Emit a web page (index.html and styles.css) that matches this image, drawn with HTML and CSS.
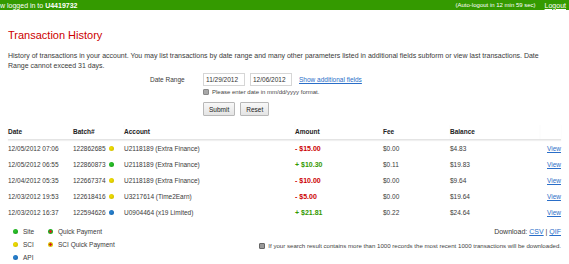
FILE: index.html
```html
<!DOCTYPE html>
<html>
<head>
<meta charset="utf-8">
<link rel="stylesheet" href="styles.css">
</head>
<body>
<div class="topbar">
  <div class="who">w logged in to <b>U4419732</b></div>
  <div class="session"><span class="auto">(Auto-logout in 12 min 59 sec)</span><a class="logout" href="#">Logout</a></div>
</div>
<div class="content">
  <h1 class="title">Transaction History</h1>
  <p class="intro">History of transactions in your account. You may list transactions by date range and many other parameters listed in additional fields subform or view last transactions. Date Range cannot exceed 31 days.</p>
  <div class="form">
    <div class="form-row">
      <label class="form-label">Date Range</label>
      <div class="form-fields">
        <div class="inputs">
          <input class="date" type="text" value="11/29/2012">
          <input class="date" type="text" value="12/06/2012">
          <a href="#" class="link">Show additional fields</a>
        </div>
        <div class="hint"><span class="info-icon"></span>Please enter date in mm/dd/yyyy format.</div>
        <div class="buttons">
          <button class="btn">Submit</button>
          <button class="btn">Reset</button>
        </div>
      </div>
    </div>
  </div>
  <table class="tx">
    <colgroup>
      <col class="c-date"><col class="c-batch"><col class="c-acc"><col class="c-amt"><col class="c-fee"><col class="c-bal"><col class="c-view">
    </colgroup>
    <thead>
      <tr><th>Date</th><th>Batch#</th><th>Account</th><th>Amount</th><th>Fee</th><th>Balance</th><th></th></tr>
    </thead>
    <tbody>
      <tr><td>12/05/2012 07:06</td><td>122862685 <span class="dot sci"></span></td><td>U2118189 (Extra Finance)</td><td class="neg">- $15.00</td><td>$0.00</td><td>$4.83</td><td><a href="#" class="link">View</a></td></tr>
      <tr><td>12/05/2012 06:55</td><td>122860873 <span class="dot site"></span></td><td>U2118189 (Extra Finance)</td><td class="pos">+ $10.30</td><td>$0.11</td><td>$19.83</td><td><a href="#" class="link">View</a></td></tr>
      <tr><td>12/04/2012 05:35</td><td>122667374 <span class="dot sci"></span></td><td>U2118189 (Extra Finance)</td><td class="neg">- $10.00</td><td>$0.00</td><td>$9.64</td><td><a href="#" class="link">View</a></td></tr>
      <tr><td>12/03/2012 19:53</td><td>122618416 <span class="dot sci"></span></td><td>U3217614 (Time2Earn)</td><td class="neg">- $5.00</td><td>$0.00</td><td>$19.64</td><td><a href="#" class="link">View</a></td></tr>
      <tr><td>12/03/2012 16:37</td><td>122594626 <span class="dot api"></span></td><td>U0904464 (x19 Limited)</td><td class="pos">+ $21.81</td><td>$0.22</td><td>$24.64</td><td><a href="#" class="link">View</a></td></tr>
    </tbody>
  </table>
  <div class="footer">
    <div class="legend">
      <div class="leg-item"><span class="dot site"></span>Site</div>
      <div class="leg-item"><span class="dot qp"></span>Quick Payment</div>
      <div class="leg-item"><span class="dot sci"></span>SCI</div>
      <div class="leg-item"><span class="dot sciqp"></span>SCI Quick Payment</div>
      <div class="leg-item"><span class="dot api"></span>API</div>
    </div>
    <div class="download-box">
      <div class="download">Download: <a href="#" class="link">CSV</a> | <a href="#" class="link">QIF</a></div>
      <div class="note"><span class="info-icon dark"></span>If your search result contains more than 1000 records the most recent 1000 transactions will be downloaded.</div>
    </div>
  </div>
</div>
</body>
</html>
```
FILE: styles.css
```css
html, body {
  margin: 0;
  padding: 0;
  background: #fff;
}
body {
  font-family: "Liberation Sans", Arial, sans-serif;
  color: #3a3a3a;
  font-size: 6.5px;
}
.topbar {
  height: 10px;
  background: #349a00;
  color: #fff;
  display: flex;
  justify-content: space-between;
  align-items: center;
  font-size: 7px;
  padding: 0 3px 0 0;
  white-space: nowrap;
}
.who b { font-weight: bold; }
.session { display: flex; align-items: center; }
.auto { font-size: 6px; margin-right: 9px; }
.logout { color: #fff; text-decoration: underline; font-size: 7px; }
.content { padding: 0 8px; }
.title {
  margin: 0;
  padding-top: 18px;
  color: #cc0000;
  font-size: 11px;
  font-weight: normal;
  line-height: 14px;
}
.intro {
  margin: 9px 0 0 0;
  line-height: 10px;
  font-size: 7px;
}
.form { margin-top: 2px; }
.form-row { display: flex; }
.form-label {
  padding-left: 142px;
  line-height: 13px;
  box-sizing: border-box;
  width: 195px;
}
.inputs { display: flex; align-items: center; gap: 5px; }
.date {
  width: 42px;
  height: 13px;
  box-sizing: border-box;
  border: 1px solid #d6d6d6;
  font-family: "Liberation Sans", Arial, sans-serif;
  font-size: 6.5px;
  padding: 0 2px;
  color: #333;
  margin: 0;
}
.link { color: #2a6ec8; text-decoration: underline; }
.inputs .link { margin-left: 2px; }
.hint {
  font-size: 6px;
  margin-top: 3px;
  display: flex;
  align-items: center;
  color: #444;
}
.info-icon {
  display: inline-block;
  width: 4px;
  height: 4px;
  background: #a8a8a8;
  border: 1px solid #888;
  border-radius: 1px;
  margin-right: 3px;
}
.info-icon.dark { background: #999; border-color: #666; }
.buttons { display: flex; gap: 5px; margin-top: 7px; }
.btn {
  height: 14px;
  padding: 0 5px;
  font-family: "Liberation Sans", Arial, sans-serif;
  font-size: 6.5px;
  color: #222;
  background: linear-gradient(#f8f8f8, #e4e4e4);
  border: 1px solid #b8b8b8;
  border-radius: 1px;
  margin: 0;
}
.tx {
  margin-top: 8px;
  width: 553px;
  border-collapse: collapse;
  table-layout: fixed;
}
.c-date { width: 65px; }
.c-batch { width: 51px; }
.c-acc { width: 171px; }
.c-amt { width: 88px; }
.c-fee { width: 67px; }
.c-bal { width: 90px; }
.c-view { width: 21px; }
.tx th {
  text-align: left;
  font-weight: bold;
  color: #222;
  padding: 0;
  height: 15px;
  border-bottom: 1px solid #e4e4e4;
  box-shadow: 0 1px 1px #f0f0f0;
}
.tx td {
  padding: 0;
  height: 16px;
  white-space: nowrap;
}
.tx td:last-child { text-align: right; }
.neg { color: #cc0000; font-weight: bold; font-size: 7px; }
.pos { color: #339900; font-weight: bold; font-size: 7px; }
.dot {
  display: inline-block;
  width: 5px;
  height: 5px;
  border-radius: 50%;
  vertical-align: middle;
  margin-left: 2px;
  box-sizing: border-box;
}
.dot.sci { background: radial-gradient(circle at 40% 40%, #f2e200, #c9b400); }
.dot.site { background: radial-gradient(circle at 40% 40%, #2ec82e, #139313); }
.dot.api { background: radial-gradient(circle at 40% 40%, #2a86d4, #145fa6); }
.dot.qp { background: radial-gradient(circle, #d42020 0 1px, #1fae1f 1.5px); }
.dot.sciqp { background: radial-gradient(circle, #d42020 0 1px, #d6c200 1.5px); }
.footer {
  display: flex;
  justify-content: space-between;
  margin-top: 7px;
}
.legend {
  display: grid;
  grid-template-columns: 35px auto;
  row-gap: 4px;
  padding-left: 5px;
  align-content: start;
}
.leg-item { display: flex; align-items: center; line-height: 9px; }
.leg-item .dot { margin: 0 5px 0 0; }
.download-box {
  display: flex;
  flex-direction: column;
  align-items: flex-end;
  padding-top: 1px;
}
.download { font-size: 7px; }
.note {
  margin-top: 7px;
  font-size: 6.1px;
  display: flex;
  align-items: center;
  color: #444;
}
```
